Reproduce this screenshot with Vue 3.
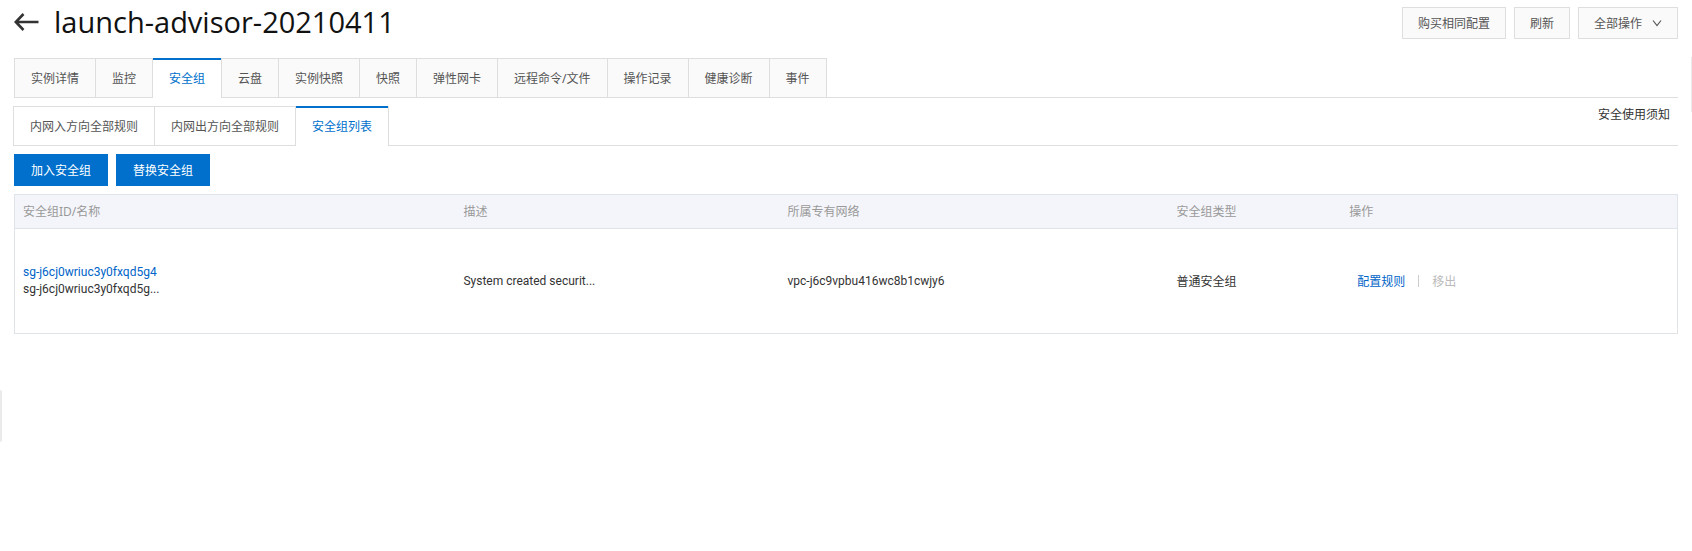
<script setup>
import { ref } from 'vue'

const tabs = ['实例详情', '监控', '安全组', '云盘', '实例快照', '快照', '弹性网卡', '远程命令/文件', '操作记录', '健康诊断', '事件']
const activeTab = ref('安全组')

const ruleTabs = ['内网入方向全部规则', '内网出方向全部规则', '安全组列表']
const activeRuleTab = ref('安全组列表')

const groups = [
  {
    id: 'sg-j6cj0wriuc3y0fxqd5g4',
    name: 'sg-j6cj0wriuc3y0fxqd5g...',
    description: 'System created securit...',
    vpc: 'vpc-j6c9vpbu416wc8b1cwjy6',
    type: '普通安全组',
  },
]
</script>

<template>
  <main class="page">
    <header class="head">
      <a class="back" href="#" aria-label="返回">
        <svg width="26" height="20" viewBox="0 0 26 20" fill="none" stroke="#333" stroke-width="2.6">
          <path d="M9.500 2 1.800 10l7.700 8M2 10h22.500" />
        </svg>
      </a>
      <h1 class="title">launch-advisor-20210411</h1>
      <div class="head-actions">
        <button class="btn" type="button">购买相同配置</button>
        <button class="btn" type="button">刷新</button>
        <button class="btn" type="button">
          全部操作
          <svg class="chevron" width="10" height="8" viewBox="0 0 10 8" fill="none" stroke="#555" stroke-width="1.200">
            <path d="M1 1.500 5 6.500l4-5" />
          </svg>
        </button>
      </div>
    </header>

    <nav class="tabs">
      <button
        v-for="tab in tabs"
        :key="tab"
        type="button"
        class="tab"
        :class="{ active: tab === activeTab }"
        @click="activeTab = tab"
      >{{ tab }}</button>
    </nav>

    <div class="subnav">
      <nav class="tabs plain">
        <button
          v-for="tab in ruleTabs"
          :key="tab"
          type="button"
          class="tab"
          :class="{ active: tab === activeRuleTab }"
          @click="activeRuleTab = tab"
        >{{ tab }}</button>
      </nav>
      <a class="notice" href="#">安全使用须知</a>
    </div>

    <div class="toolbar">
      <button class="btn primary" type="button">加入安全组</button>
      <button class="btn primary" type="button">替换安全组</button>
    </div>

    <table class="groups">
      <thead>
        <tr>
          <th class="col-id">安全组ID/名称</th>
          <th class="col-desc">描述</th>
          <th class="col-vpc">所属专有网络</th>
          <th class="col-type">安全组类型</th>
          <th>操作</th>
        </tr>
      </thead>
      <tbody>
        <tr v-for="group in groups" :key="group.id">
          <td class="latin">
            <a class="link" href="#">{{ group.id }}</a>
            <div>{{ group.name }}</div>
          </td>
          <td class="latin">{{ group.description }}</td>
          <td class="latin">{{ group.vpc }}</td>
          <td>{{ group.type }}</td>
          <td>
            <div class="row-actions">
              <a class="link" href="#">配置规则</a>
              <span class="divider"></span>
              <button class="remove" type="button" disabled>移出</button>
            </div>
          </td>
        </tr>
      </tbody>
    </table>

    <div class="handle handle-left"></div>
    <div class="handle handle-right"></div>
  </main>
</template>

<style>
body {
  background: #fff;
}
</style>

<style scoped>
.page {
  position: relative;
  box-sizing: border-box;
  min-height: 100vh;
  padding: 0 14px;
  overflow: hidden;
  color: #333;
  font-family: "Noto Sans", "Noto Sans CJK SC", sans-serif;
  font-size: 12px;
  line-height: 17px;
}
button {
  font: inherit;
  white-space: nowrap;
}
a {
  color: inherit;
  text-decoration: none;
}
.head {
  display: flex;
  align-items: center;
  height: 44px;
  margin-bottom: 14px;
}
.back {
  display: flex;
  margin-right: 14px;
}
.title {
  margin: 0;
  color: #111;
  font-family: "Open Sans", "Noto Sans", sans-serif;
  font-size: 29px;
  font-weight: 400;
  line-height: 40px;
}
.head-actions {
  display: flex;
  gap: 8px;
  margin-left: auto;
  padding-top: 2px;
}
.btn {
  display: flex;
  align-items: center;
  box-sizing: border-box;
  height: 32px;
  padding: 0 15px;
  border: 1px solid #dedede;
  background: #fafafa;
  color: #555;
}
.chevron {
  margin-left: 10px;
}
.tabs {
  display: flex;
  box-sizing: border-box;
  height: 40px;
  border-bottom: 1px solid #dedede;
}
.tab {
  box-sizing: border-box;
  height: 39px;
  padding: 0 16px;
  border: solid #dedede;
  border-width: 1px 0 0 1px;
  background: #fafafa;
  color: #555;
}
.tab:last-child {
  border-right-width: 1px;
}
.tab.active {
  height: 40px;
  border-top: 0;
  background: linear-gradient(#0070cc, #0070cc) top / 100% 2px no-repeat #fff;
  color: #0070cc;
}
.plain .tab {
  background-color: #fff;
}
.subnav {
  display: flex;
  margin: 8px 0 8px -1px;
}
.subnav .tabs {
  flex: 1;
}
.notice {
  align-self: flex-start;
  height: 39px;
  padding-right: 8px;
  border-bottom: 1px solid #dedede;
}
.toolbar {
  display: flex;
  gap: 8px;
  margin-bottom: 8px;
}
.btn.primary {
  padding: 0 16px;
  border-color: #0070cc;
  background: #0070cc;
  color: #fff;
}
.groups {
  width: 100%;
  table-layout: fixed;
  border: 1px solid #dee4e8;
  border-spacing: 0;
}
.groups th,
.groups td {
  box-sizing: border-box;
  padding: 0 8px;
  text-align: left;
}
.groups th {
  height: 34px;
  border-bottom: 1px solid #dee4e8;
  background: #f4f5fa;
  color: #999;
  font-weight: 400;
}
.groups td {
  height: 104px;
}
.groups .latin {
  font-family: Roboto, "Noto Sans CJK SC", sans-serif;
}
.col-id {
  width: 26.5%;
}
.col-desc {
  width: 19.5%;
}
.col-vpc {
  width: 23.4%;
}
.col-type {
  width: 10.4%;
}
.link {
  color: #0064c8;
}
.row-actions {
  display: flex;
  align-items: center;
  padding-left: 8px;
}
.divider {
  width: 1px;
  height: 12px;
  margin: 0 13px;
  background: #ccc;
}
.remove {
  padding: 0;
  border: 0;
  background: none;
  color: #bbb;
}
.handle {
  position: absolute;
  background: #ebebeb;
}
.handle-left {
  top: 390px;
  left: 0;
  width: 2px;
  height: 52px;
  border-radius: 0 2px 2px 0;
}
.handle-right {
  top: 57px;
  right: 0;
  width: 1px;
  height: 55px;
}
</style>
